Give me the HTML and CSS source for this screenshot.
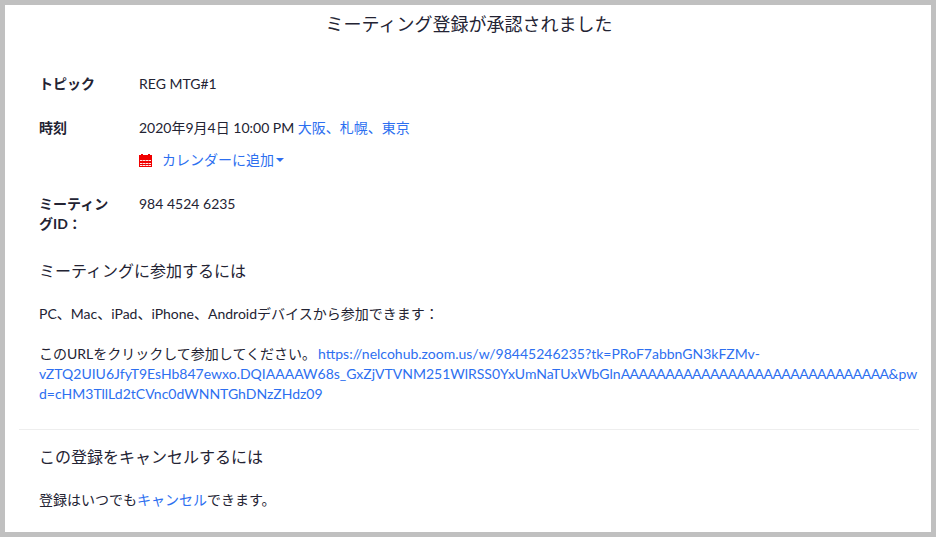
FILE: index.html
```html
<!DOCTYPE html>
<html lang="ja">
<head>
    <meta charset="UTF-8">
    <title>ミーティング登録が承認されました</title>
    <link rel="stylesheet" href="styles.css">
</head>
<body>
    <div class="frame">
        <h1 class="title">ミーティング登録が承認されました</h1>

        <div class="details">
            <div class="row">
                <div class="label">トピック</div>
                <div class="value">REG MTG#1</div>
            </div>
            <div class="row row-time">
                <div class="label">時刻</div>
                <div class="value">
                    <div>2020年9月4日 10:00 PM <a href="#">大阪、札幌、東京</a></div>
                    <a class="calendar" href="#">
                        <svg class="calendar-icon" width="13" height="13" viewBox="0 0 13 13">
                            <rect x="0" y="1" width="13" height="12" fill="#f00000"/>
                            <rect x="2" y="0" width="2" height="2" fill="#f00000"/>
                            <rect x="9" y="0" width="2" height="2" fill="#f00000"/>
                            <path d="M1 6.5h11M1 9.5h11M1 11.5h11" stroke="#ffe6e6" stroke-width="1" stroke-dasharray="2.5 .5" fill="none"/>
                        </svg>
                        <span>カレンダーに追加</span><span class="caret"></span>
                    </a>
                </div>
            </div>
            <div class="row row-id">
                <div class="label">ミーティングID：</div>
                <div class="value">984 4524 6235</div>
            </div>
        </div>

        <div class="section">
            <h2 class="heading">ミーティングに参加するには</h2>
            <p class="devices">PC、Mac、iPad、iPhone、Androidデバイスから参加できます：</p>
            <p class="join">このURLをクリックして参加してください。<a href="#">https://nelcohub.zoom.us/w/98445246235?tk=PRoF7abbnGN3kFZMv-vZTQ2UIU6JfyT9EsHb847ewxo.DQIAAAAW68s_GxZjVTVNM251WlRSS0YxUmNaTUxWbGln<span class="url-pad">AAAAAAAAAAAAAAAAAAAAAAAAAAAAAA</span>&amp;&#8288;pwd=cHM3TllLd2tCVnc0dWNNTGhDNzZHdz09</a></p>
        </div>

        <hr class="divider">

        <div class="section">
            <h2 class="heading">この登録をキャンセルするには</h2>
            <p class="cancel">登録はいつでも<a href="#">キャンセル</a>できます。</p>
        </div>
    </div>
</body>
</html>
```
FILE: styles.css
```css
html, body {
    height: 100%;
}

body {
    margin: 0;
    overflow: hidden;
    font-family: Lato, "Noto Sans CJK JP", sans-serif;
    font-size: 14px;
    line-height: 20px;
    color: #232333;
    background-color: #fff;
}

a {
    color: #2d6ff0;
    text-decoration: none;
}

.frame {
    box-sizing: border-box;
    height: 537px;
    border: 5px solid #c0c0c0;
    padding: 0 12px 0 14px;
    overflow: hidden;
}

.title {
    margin: 6px 0 0;
    font-size: 18px;
    line-height: 26px;
    font-weight: 400;
    text-align: center;
}

.details {
    margin-top: 37px;
    padding: 0 20px;
}

.row {
    display: flex;
    margin-bottom: 24px;
}

.label {
    width: 100px;
    padding-right: 20px;
    box-sizing: border-box;
    font-weight: 700;
    line-height: 20px;
}

.row-id {
    margin-bottom: 25px;
}

.value {
    flex: 1;
}

.calendar {
    display: flex;
    align-items: center;
    margin-top: 12px;
}

.calendar-icon {
    margin-right: 10px;
}

.caret {
    width: 0;
    height: 0;
    margin-left: 2px;
    border-top: 4px solid #2d6ff0;
    border-left: 4px solid transparent;
    border-right: 4px solid transparent;
}

.section {
    padding: 0 0 0 20px;
}

.heading {
    margin: 0;
    font-size: 16px;
    line-height: 24px;
    font-weight: 400;
}

.devices {
    margin: 21px 0 0;
}

.join {
    margin: 20px 0 0;
    overflow-wrap: anywhere;
}

.join a {
    margin-left: 2px;
}

.url-pad {
    letter-spacing: -0.55px;
}

.divider {
    height: 1px;
    margin: 25px 0 15px;
    border: 0;
    background-color: #eeeeee;
}

.cancel {
    margin: 21px 0 0;
}
```
